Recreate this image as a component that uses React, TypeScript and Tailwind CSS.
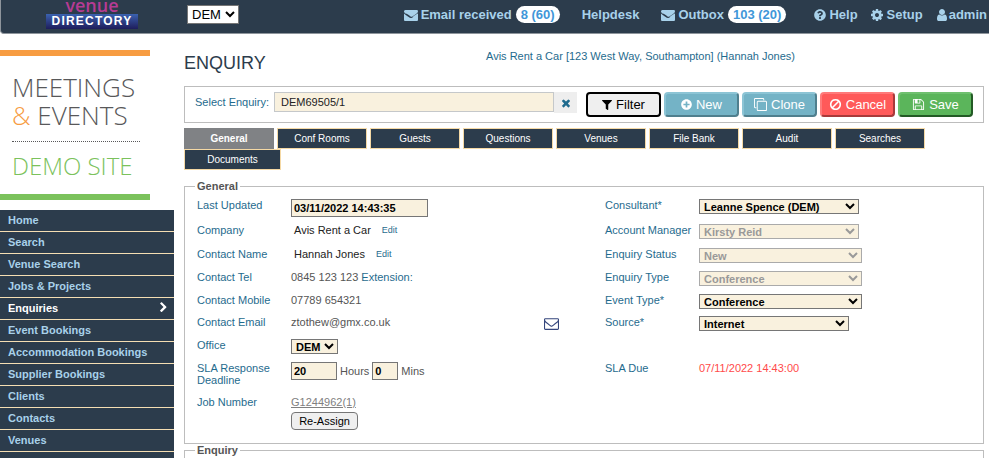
import type { ReactNode } from 'react'
import { FaFilter, FaPlusCircle, FaQuestionCircle } from 'react-icons/fa'

const paths = {
  envelope: 'M1792 710v794q0 66-47 113t-113 47H160q-66 0-113-47T0 1504V710q44 49 101 87 362 246 497 345 57 42 92.5 65.5t94.5 48 110 24.5h2q51 0 110-24.5t94.5-48T1091 1142q170-123 498-345 57-39 203-87zm0-294q0 79-49 151t-122 123q-376 261-468 325-10 7-42.5 31t-54 38-52 31.5-47.5 10.5h-2q-21 0-47.5-10.5t-52-31.5-54-38-42.5-31q-91-64-262-182.5T172 690q-62-42-117-115.5T0 438q0-78 41.5-130T160 256h1472q65 0 112.5 47t47.5 113z',
  envelopeOpen: 'M1664 1504V736q-32 36-69 66-268 206-426 338-51 43-83 67t-86.5 48.5T897 1280h-2q-48 0-102.5-24.5T706 1207t-83-67q-158-132-426-338-37-30-69-66v768q0 13 9.5 22.5t22.5 9.5h1472q13 0 22.5-9.5t9.5-22.5zm0-1051v-24.5l-.5-13-3-12.5-5.5-9-9-7.5-14-2.5H160q-13 0-22.5 9.5T128 416q0 168 147 284 193 152 401 317 6 5 35 29.5t46 37.5 44.5 31.5T852 1143t43 9h2q20 0 43-9t50.5-27.5 44.5-31.5 46-37.5 35-29.5q208-165 401-317 54-43 100.5-115.5T1664 453zm128-37v1088q0 66-47 113t-113 47H160q-66 0-113-47T0 1504V416q0-66 47-113t113-47h1472q66 0 113 47t47 113z',
  clone: 'M1664 1632V544q0-13-9.5-22.5T1632 512H544q-13 0-22.5 9.5T512 544v1088q0 13 9.5 22.5t22.5 9.5h1088q13 0 22.5-9.5t9.5-22.5zm128-1088v1088q0 66-47 113t-113 47H544q-66 0-113-47t-47-113V544q0-66 47-113t113-47h1088q66 0 113 47t47 113zm-384-384v160h-128V160q0-13-9.5-22.5T1248 128H160q-13 0-22.5 9.5T128 160v1088q0 13 9.5 22.5t22.5 9.5h160v128H160q-66 0-113-47T0 1248V160Q0 94 47 47T160 0h1088q66 0 113 47t47 113z',
  save: 'M512 1536h768v-384H512v384zm896 0h128V640q0-14-10-38.5t-20-34.5l-281-281q-10-10-34-20t-39-10v416q0 40-28 68t-68 28H480q-40 0-68-28t-28-68V256H256v1280h128v-416q0-40 28-68t68-28h832q40 0 68 28t28 68v416zm-384-928V288q0-13-9.5-22.5T992 256H800q-13 0-22.5 9.5T768 288v320q0 13 9.5 22.5t22.5 9.5h192q13 0 22.5-9.5t9.5-22.5zm640 32v928q0 40-28 68t-68 28H224q-40 0-68-28t-28-68V224q0-40 28-68t68-28h928q40 0 88 20t76 48l280 280q28 28 48 76t20 88z',
  cog: 'M1152 896q0-106-75-181t-181-75-181 75-75 181 75 181 181 75 181-75 75-181zm512-109v222q0 12-8 23t-20 13l-185 28q-19 54-39 91 35 50 107 138 10 12 10 25t-9 23q-27 37-99 108t-94 71q-12 0-26-9l-138-108q-44 23-91 38-16 136-29 186-7 28-36 28H785q-14 0-24.5-8.5T749 1634l-28-184q-49-16-90-37l-141 107q-10 9-25 9-14 0-25-11-126-114-165-168-7-10-7-23 0-12 8-23 15-21 51-66.5t54-70.5q-27-50-41-99l-183-27q-13-2-21-12.5t-8-23.5V783q0-12 8-23t19-13l186-28q14-46 39-92-40-57-107-138-10-12-10-24 0-10 9-23 26-36 98.5-107.5T465 263q13 0 26 10l138 107q44-23 91-38 16-136 29-186 7-28 36-28h222q14 0 24.5 8.5T1043 158l28 184q49 16 90 37l142-107q9-9 24-9 13 0 25 10 129 119 165 170 7 8 7 22 0 12-8 23-15 21-51 66.5t-54 70.5q26 50 41 98l183 28q13 2 21 12.5t8 23.5z',
  user: 'M1536 1399q0 109-62.5 187t-150.5 78H469q-88 0-150.5-78T256 1399q0-85 8.5-160.5t31.5-152 58.5-131 94-89T583 832q131 128 313 128t313-128q76 0 134.5 34.5t94 89 58.5 131 31.5 152 8.5 160.5zm-256-887q0 159-112.5 271.5T896 896 624.5 783.5 512 512t112.5-271.5T896 128t271.5 112.5T1280 512z',
  times: 'M1490 1322q0 40-28 68l-136 136q-28 28-68 28t-68-28l-294-294-294 294q-28 28-68 28t-68-28l-136-136q-28-28-28-68t28-68l294-294-294-294q-28-28-28-68t28-68l136-136q28-28 68-28t68 28l294 294 294-294q28-28 68-28t68 28l136 136q28 28 28 68t-28 68l-294 294 294 294q28 28 28 68z',
  ban: 'M1440 893q0-161-87-295l-754 753q137 89 297 89 111 0 211.5-43.5t173.5-116.5 116-174.5 43-212.5zm-999 299l755-754q-135-91-300-91-148 0-273 73T425 619t-73 274q0 162 89 299zm1223-299q0 157-61 300t-163.5 246-245 164-298.5 61-298.5-61-245-164T189 1193t-61-300 61-299.5T352.5 348t245-164T896 123t298.5 61 245 164T1603 593.5t61 299.5z',
  chevron: 'M1363 877l-742 742q-19 19-45 19t-45-19l-166-166q-19-19-19-45t19-45l531-531-531-531q-19-19-19-45t19-45L531 45q19-19 45-19t45 19l742 742q19 19 19 45t-19 45z',
}

function Icon({ name, className }: { name: keyof typeof paths; className: string }) {
  return (
    <svg viewBox="0 0 1792 1792" fill="currentColor" aria-hidden="true" className={`shrink-0 ${className}`}>
      <path d={paths[name]} />
    </svg>
  )
}

const menu = ['Home', 'Search', 'Venue Search', 'Jobs & Projects', 'Enquiries', 'Event Bookings',
  'Accommodation Bookings', 'Supplier Bookings', 'Clients', 'Contacts', 'Venues']

const tabs = ['General', 'Conf Rooms', 'Guests', 'Questions', 'Venues', 'File Bank', 'Audit', 'Searches', 'Documents']

const selects = [
  { id: 'consultant', label: 'Consultant*', value: 'Leanne Spence (DEM)', width: 'w-40', row: 'h-[25px]' },
  { id: 'manager', label: 'Account Manager', value: 'Kirsty Reid', width: 'w-40', row: 'h-6', disabled: true },
  { id: 'status', label: 'Enquiry Status', value: 'New', width: 'w-[163px]', row: 'h-[23px]', disabled: true },
  { id: 'type', label: 'Enquiry Type', value: 'Conference', width: 'w-[163px]', row: 'h-[23px]', disabled: true },
  { id: 'event', label: 'Event Type*', value: 'Conference', width: 'w-[163px]', row: 'h-[22px]' },
  { id: 'source', label: 'Source*', value: 'Internet', width: 'w-[150px]', row: 'h-[23px]' },
]

const field = 'border border-[#767676] bg-[#f9f1de] font-bold text-black text-[11px]'

/** One label/value line of the enquiry form */
function Row({ label, htmlFor, className = 'h-[23px]', children }: { label: string; htmlFor?: string; className?: string; children: ReactNode }) {
  return (
    <div className={`flex items-start ${className}`}>
      {htmlFor
        ? <label htmlFor={htmlFor} className="w-[94px] shrink-0 text-[#1f6b8e]">{label}</label>
        : <span className="w-[94px] shrink-0 text-[#1f6b8e]">{label}</span>}
      {children}
    </div>
  )
}

function Header() {
  return (
    <header className="flex h-[34px] shrink-0 items-start rounded-bl border-b border-l border-[#8e959c] bg-[#2c3c4c] text-[13px] font-bold text-[#a8d1ea]">
      <a href="#" className="ml-[45px] flex w-[92px] flex-col items-center font-['Open_Sans',sans-serif]">
        <span className="h-[14px] text-[18px] leading-[10px] font-semibold text-[#b63b94]">venue</span>
        <span className="h-[15px] w-full bg-linear-to-b from-[#3b62b0] to-[#1e1d5c] text-center font-['Liberation_Sans',sans-serif] text-[12px] leading-[15px] tracking-widest text-white">DIRECTORY</span>
      </a>
      <select aria-label="Database" className="mt-[5px] ml-[49px] h-[19px] w-[52px] border border-[#767676] bg-white text-[13px] font-normal text-black">
        <option>DEM</option>
      </select>
      <nav className="mt-[6px] ml-auto flex h-[17px] items-center pr-0.5 leading-[17px] whitespace-nowrap">
        <a href="#" className="mr-[22px] flex items-center">
          <Icon name="envelope" className="mr-[3px] size-[14px]" />Email received
          <span className="ml-1 rounded-full bg-white px-[5px] text-[#3f97d9]">8 (60)</span>
        </a>
        <a href="#" className="mr-[22px]">Helpdesk</a>
        <a href="#" className="mr-7 flex items-center">
          <Icon name="envelope" className="mr-[3px] size-[14px]" />Outbox
          <span className="ml-1 rounded-full bg-white px-[5px] text-[#3f97d9]">103 (20)</span>
        </a>
        <a href="#" className="mr-3 flex items-center"><FaQuestionCircle className="mr-[3px] size-3" />Help</a>
        <a href="#" className="mr-3 flex items-center"><Icon name="cog" className="mr-[3px] size-[14px]" />Setup</a>
        <a href="#" className="flex items-center"><Icon name="user" className="size-[14px]" />admin</a>
      </nav>
    </header>
  )
}

function Sidebar() {
  return (
    <aside className="flex w-[174px] shrink-0 flex-col">
      <div className="mt-4 mb-[10px] h-[150px] w-[150px] border-y-[6px] border-t-[#f79c42] border-b-[#7bc25c] pt-[17px] pl-3 font-['Open_Sans',sans-serif] text-[26px] leading-7 font-light whitespace-nowrap text-[#58585a]">
        <div>MEETINGS</div>
        <div><span className="text-[#f79c42]">&amp;</span> EVENTS</div>
        <div className="mt-3 mb-[10px] w-32 border-t border-dotted border-[#58585a]" />
        <div className="text-[24px] text-[#7bc25c]">DEMO SITE</div>
      </div>
      <nav className="flex flex-1 flex-col bg-[#2c3c4c] text-[11px] font-bold">
        {menu.map((item) => (
          <a key={item} href="#"
            className={`flex h-[22px] shrink-0 items-center justify-between border-b border-[#f5deb3] pr-[5px] pb-0.5 pl-2 ${item === 'Enquiries' ? 'text-white' : 'text-[#a8d1ea]'}`}>
            {item}
            {item === 'Enquiries' && <Icon name="chevron" className="size-[11px]" />}
          </a>
        ))}
      </nav>
    </aside>
  )
}

function SearchBar() {
  const button = 'flex h-[25px] w-[75px] items-center justify-center gap-1 rounded border-2 text-[13px]'
  const blue = 'border-t-[#8cc4d5] border-l-[#8cc4d5] border-r-[#4f7f8e] border-b-[#4f7f8e] bg-[#74b3c6] text-white'
  return (
    <div className="mt-[9px] flex h-[37px] shrink-0 items-start border border-[#bdbdbd] px-[10px] pt-[5px]">
      <label htmlFor="enquiry" className="w-[79px] shrink-0 leading-5 text-[#1f6b8e]">Select Enquiry:</label>
      <input id="enquiry" defaultValue="DEM69505/1" className="h-5 min-w-0 flex-1 border border-[#c5c8ca] bg-[#f9f1de] px-[6px] text-[#222]" />
      <button aria-label="Clear" className="mr-[9px] flex h-[21px] w-[23px] items-center justify-center bg-[#eee] text-[#1f6b8e]">
        <Icon name="times" className="size-3" />
      </button>
      <div className="flex gap-[3px] font-medium">
        <button className={`${button} border-black bg-[#efefef] text-black`}><FaFilter className="size-[10px]" />Filter</button>
        <button className={`${button} ${blue}`}><FaPlusCircle className="size-[11px]" />New</button>
        <button className={`${button} ${blue}`}><Icon name="clone" className="size-[13px]" />Clone</button>
        <button className={`${button} border-t-[#ff7a7a] border-r-[#a83a3a] border-b-[#a83a3a] border-l-[#ff7a7a] bg-[#ff5a5a] text-white`}><Icon name="ban" className="size-[13px]" />Cancel</button>
        <button className={`${button} border-t-[#6fc06f] border-r-[#235a25] border-b-[#235a25] border-l-[#6fc06f] bg-[#5bb55b] text-white`}><Icon name="save" className="size-[13px]" />Save</button>
      </div>
    </div>
  )
}

function GeneralForm() {
  return (
    <fieldset className="mt-[10px] border border-[#bdbdbd] px-3 pt-[7px] pb-[13px]">
      <legend className="-ml-0.5 px-0.5 font-bold text-[#555]">General</legend>
      <div className="grid grid-cols-[408px_1fr]">
        <div>
          <Row label="Last Updated" htmlFor="updated" className="h-[25px]">
            <input id="updated" defaultValue="03/11/2022 14:43:35" className={`${field} h-[18px] w-[137px] px-0.5`} />
          </Row>
          <Row label="Company" className="h-6">
            <span className="px-[3px] text-[#222]">Avis Rent a Car</span>
            <a href="#" className="ml-2 text-[9px] text-[#1f6b8e]">Edit</a>
          </Row>
          <Row label="Contact Name">
            <span className="px-[3px] text-[#222]">Hannah Jones</span>
            <a href="#" className="ml-2 text-[9px] text-[#1f6b8e]">Edit</a>
          </Row>
          <Row label="Contact Tel">0845 123 123&nbsp;<span className="text-[#1f6b8e]">Extension:</span></Row>
          <Row label="Contact Mobile" className="h-[22px]">07789 654321</Row>
          <Row label="Contact Email">
            <span>ztothew@gmx.co.uk</span>
            <button aria-label="Send email" className="mr-[46px] ml-auto text-[#34457c]"><Icon name="envelopeOpen" className="size-[15px]" /></button>
          </Row>
          <Row label="Office" htmlFor="office">
            <select id="office" className={`${field} h-[15px] w-[47px]`}><option>DEM</option></select>
          </Row>
          <Row label="SLA Response Deadline" htmlFor="hours" className="h-[34px]">
            <div className="flex items-center">
              <input id="hours" defaultValue="20" className={`${field} h-[18px] w-[46px] px-0.5`} />
              <span className="mx-[3px]">Hours</span>
              <input id="mins" aria-label="Mins" defaultValue="0" className={`${field} h-[18px] w-[26px] px-0.5`} />
              <label htmlFor="mins" className="ml-[3px]">Mins</label>
            </div>
          </Row>
          <Row label="Job Number" className="h-[34px]">
            <div className="flex flex-col items-start gap-1">
              <a href="#" className="text-[#808080] underline">G1244962(1)</a>
              <button className="h-[18px] w-[67px] rounded-sm border border-[#767676] bg-[#efefef] text-black">Re-Assign</button>
            </div>
          </Row>
        </div>
        <div>
          {selects.map((s) => (
            <Row key={s.id} label={s.label} htmlFor={s.id} className={s.row}>
              <select id={s.id} disabled={s.disabled} className={`${field} h-[15px] ${s.width} disabled:border-[#aaa] disabled:text-[#999]`}>
                <option>{s.value}</option>
              </select>
            </Row>
          ))}
          <div className="h-[23px]" />
          <Row label="SLA Due"><span className="text-[#ff4a4a]">07/11/2022 14:43:00</span></Row>
        </div>
      </div>
    </fieldset>
  )
}

export default function App() {
  return (
    <div className="flex h-screen flex-col overflow-hidden bg-white font-['Liberation_Sans',Arial,sans-serif] text-[11px] leading-3 text-[#555]">
      <Header />
      <div className="flex min-h-0 flex-1">
        <Sidebar />
        <main className="flex min-w-0 flex-1 flex-col pr-[5px] pl-[10px]">
          <div className="flex shrink-0 items-start pt-4">
            <h1 className="w-[302px] text-[18px] leading-[27px] text-[#2c3c4c]">ENQUIRY</h1>
            <p className="leading-3 text-[#1f6b8e]">Avis Rent a Car [123 West Way, Southampton] (Hannah Jones)</p>
          </div>
          <SearchBar />
          <div className="mt-[5px] flex shrink-0 flex-wrap gap-x-[3px]">
            {tabs.map((tab) => (
              <button key={tab}
                className={`h-[21px] text-[10px] text-white ${tab === 'Documents' ? 'w-[97px]' : 'w-[90px]'} ${tab === 'General' ? 'bg-[#808285] font-bold' : 'border border-[#f5d9a5] bg-[#2c3c4c]'}`}>
                {tab}
              </button>
            ))}
          </div>
          <GeneralForm />
          <fieldset className="min-h-40 border border-[#bdbdbd] px-3">
            <legend className="-ml-0.5 px-0.5 font-bold text-[#555]">Enquiry</legend>
          </fieldset>
        </main>
      </div>
    </div>
  )
}
